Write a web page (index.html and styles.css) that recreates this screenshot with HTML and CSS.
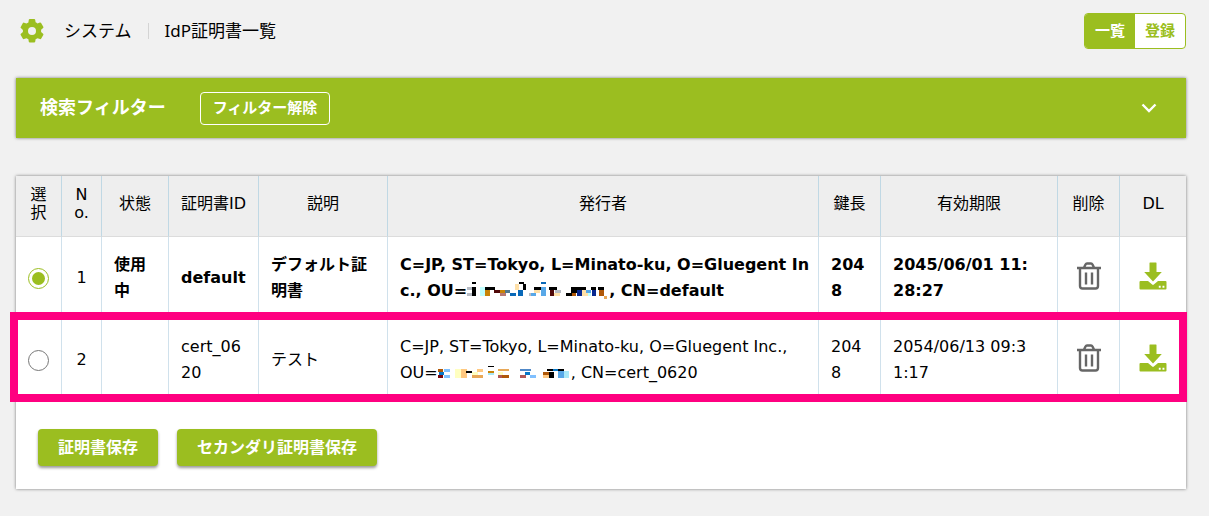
FILE: index.html
```html
<!DOCTYPE html>
<html lang="ja">
<head>
  <meta charset="UTF-8">
  <meta name="viewport" content="width=device-width, initial-scale=1.0">
  <title>IdP証明書一覧</title>
  <link rel="stylesheet" href="styles.css">
</head>
<body>

  <!-- shared icons -->
  <svg class="sprite" aria-hidden="true">
    <symbol id="trash" viewBox="0 0 24 28">
      <path d="M0 6h24M7 5.500l1.500-3q.5-1 1.500-1h4q1 0 1.500 1l1.500 3M3 6v18q0 2.500 2.500 2.500h13q2.500 0 2.500-2.500V6M9 10.500v12M15 10.500v12" fill="none" stroke="currentColor" stroke-width="2.400"/>
    </symbol>
    <symbol id="download" viewBox="0 0 28 28">
      <path d="M10.500 1q0-.5.5-.5h6q.500 0 .500.500v9h5.300L14 19.500 5.200 10h5.300z" fill="currentColor"/>
      <path d="M1.500 19H9l4.200 3.600q.8.600 1.600 0L19 19h7.500q1 0 1 1v6.500q0 1-1 1h-25q-1 0-1-1V20q0-1 1-1zm18.300 4.800v1.900h1.900v-1.900zm3.700 0v1.900h1.900v-1.900z" fill="currentColor" fill-rule="evenodd"/>
    </symbol>
  </svg>

  <header class="page-header">
    <svg class="gear" viewBox="0 0 24 24" aria-hidden="true">
      <path fill-rule="evenodd" d="M8.800.8q.2-.8 1-.8h4.400q.8 0 1 .8l.4 2.500q1 .4 1.900 1.100l2.400-.9q.8-.3 1.200.4l2.200 3.800q.4.700-.2 1.200l-2 1.800v2.200l2 1.800q.6.500.2 1.200l-2.200 3.800q-.4.700-1.200.4l-2.400-.9q-.9.700-1.900 1.100l-.4 2.500q-.2.800-1 .8H9.800q-.8 0-1-.8l-.4-2.500q-1-.4-1.900-1.100l-2.400.9q-.8.300-1.200-.4L.7 15.900q-.4-.7.2-1.200l2-1.600v-2.200l-2-1.800q-.6-.5-.2-1.200l2.200-3.800q.4-.7 1.200-.4l2.400.9q.9-.7 1.900-1.100zM12 8a4 4 0 1 0 0 8 4 4 0 0 0 0-8z" fill="currentColor"/>
    </svg>
    <span class="section">システム</span>
    <h1>IdP証明書一覧</h1>
    <nav class="switch">
      <a href="#list" class="active">一覧</a>
      <a href="#new">登録</a>
    </nav>
  </header>

  <section class="filter">
    <h2>検索フィルター</h2>
    <button type="button" class="clear">フィルター解除</button>
    <button type="button" class="expand" aria-label="開く">
      <svg width="16" height="10" viewBox="0 0 16 10"><path d="M1.500 1.500L8 8l6.500-6.500" fill="none" stroke="currentColor" stroke-width="2.400"/></svg>
    </button>
  </section>

  <main class="card">
    <table>
      <colgroup>
        <col class="c-select">
        <col class="c-no">
        <col class="c-state">
        <col class="c-id">
        <col class="c-desc">
        <col>
        <col class="c-bits">
        <col class="c-expire">
        <col class="c-delete">
        <col class="c-dl">
      </colgroup>
      <thead>
        <tr>
          <th>選択</th>
          <th>No.</th>
          <th>状態</th>
          <th>証明書ID</th>
          <th>説明</th>
          <th>発行者</th>
          <th>鍵長</th>
          <th>有効期限</th>
          <th>削除</th>
          <th>DL</th>
        </tr>
      </thead>
      <tbody>
        <tr class="in-use">
          <td class="center"><input type="radio" name="cert" aria-label="default" checked></td>
          <td class="center no">1</td>
          <td>使用中</td>
          <td>default</td>
          <td>デフォルト証明書</td>
          <td class="issuer">C=JP, ST=Tokyo, L=Minato-ku, O=Gluegent Inc., OU=<svg class="mask" width="142" height="18" viewBox="0 0 142 18" shape-rendering="crispEdges" aria-hidden="true">
            <path fill="#000" d="M5 1h4v2H5zM5 6h4v9H5zM18 6h10v3H18zM52 1h5v2h-5zM56 3h3v6h-3zM67 6h8v3h-8zM82 6h8v3h-8zM104 6h6v6h-6zM99 12h7v3h-7zM110 6h9v3h-9zM124 6h5v3h-5zM131 6h6v3h-6z"/>
            <path fill="#b8bcc4" d="M0 6h5v3H0zM0 12h5v3H0zM62 12h6v3h-6zM88 9h6v3h-6z"/>
            <path fill="#c0ffff" d="M13 6h5v9h-5zM119 12h5v3h-5z"/>
            <path fill="#c88408" d="M18 9h5v6h-5zM33 9h5v3h-5z"/>
            <path fill="#500808" d="M27 9h6v3h-6zM83 9h4v6h-4z"/>
            <path fill="#b87870" d="M33 12h6v3h-6z"/>
            <path fill="#507890" d="M38 9h5v3h-5z"/>
            <path fill="#0868b8" d="M43 12h6v3h-6zM51 9h5v6h-5zM74 1h5v2h-5z"/>
            <path fill="#ffe0a8" d="M48 3h4v6h-4zM67 9h6v3h-6zM115 9h6v6h-6zM87 12h6v3h-6z"/>
            <path fill="#58a8e8" d="M74 6h5v9h-5zM64 12h5v3h-5zM119 9h5v3h-5z"/>
            <path fill="#082890" d="M110 9h5v6h-5zM125 9h4v6h-4z"/>
            <path fill="#b05808" d="M132 9h5v6h-5zM105 12h4v3h-4z"/>
            <path fill="#e8a858" d="M137 15h3v3h-3z"/>
          </svg>, CN=default</td>
          <td>2048</td>
          <td class="expire">2045/06/01 11:28:27</td>
          <td class="center"><button type="button" class="icon" aria-label="削除"><svg class="trash"><use href="#trash"/></svg></button></td>
          <td class="center"><a href="#dl" class="icon download" aria-label="DL"><svg><use href="#download"/></svg></a></td>
        </tr>
        <tr class="marked">
          <td class="center"><input type="radio" name="cert" aria-label="cert_0620"></td>
          <td class="center no">2</td>
          <td></td>
          <td>cert_0620</td>
          <td>テスト</td>
          <td class="issuer">C=JP, ST=Tokyo, L=Minato-ku, O=Gluegent Inc.,<br>OU=<svg class="mask" width="133" height="18" viewBox="0 0 133 18" shape-rendering="crispEdges" aria-hidden="true">
            <path fill="#b05808" d="M0 6h5v3H0zM62 12h9v3h-9zM105 9h6v3h-6z"/>
            <path fill="#0878c8" d="M1 9h5v3H1zM87 9h5v3h-5zM114 6h6v2h-6z"/>
            <path fill="#780810" d="M0 12h5v3H0z"/>
            <path fill="#80c0ff" d="M6 6h6v3H6zM6 12h6v3H6zM92 12h6v3h-6z"/>
            <path fill="#ffffc0" d="M17 6h6v9h-6zM34 9h6v3h-6zM60 9h5v3h-5z"/>
            <path fill="#ffc880" d="M23 6h6v9h-6zM39 6h6v3h-6zM105 12h6v3h-6z"/>
            <path fill="#000" d="M28 8h6v2h-6zM50 3h6v1h-6zM109 6h6v2h-6zM120 6h6v2h-6zM111 9h5v6h-5z"/>
            <path fill="#e8a858" d="M34 12h11v3H34zM60 6h11v2H60z"/>
            <path fill="#c88408" d="M50 8h6v2h-6z"/>
            <path fill="#a8e8f8" d="M50 10h6v2h-6zM126 8h5v7h-5z"/>
            <path fill="#5088c8" d="M82 6h11v2H82z"/>
            <path fill="#b05858" d="M82 12h6v3h-6zM60 12h4v3h-4z"/>
            <path fill="#58a8e8" d="M120 8h6v7h-6z"/>
          </svg>, CN=cert_0620</td>
          <td>2048</td>
          <td class="expire">2054/06/13 09:31:17</td>
          <td class="center"><button type="button" class="icon" aria-label="削除"><svg class="trash"><use href="#trash"/></svg></button></td>
          <td class="center"><a href="#dl" class="icon download" aria-label="DL"><svg><use href="#download"/></svg></a></td>
        </tr>
      </tbody>
    </table>
    <div class="actions">
      <button type="button">証明書保存</button>
      <button type="button">セカンダリ証明書保存</button>
    </div>
  </main>

</body>
</html>
```
FILE: styles.css
```css
:root {
  --green: #9bbe20;
  --line: #d0e1ec;
  --mark: #ff0080;
}

* {
  box-sizing: border-box;
}

body {
  margin: 0;
  padding: 13px 23px 27px 16px;
  background: #f1f1f1;
  color: #000;
  font-family: "Noto Sans", "Noto Sans CJK JP", sans-serif;
  font-size: 16px;
  line-height: 26px;
}

h1,
h2 {
  margin: 0;
  font-size: 17px;
}

button {
  font-family: inherit;
  cursor: pointer;
}

.sprite {
  position: absolute;
  width: 0;
  height: 0;
}

.page-header {
  display: flex;
  align-items: center;
  height: 36px;
  padding-left: 4px;
  font-size: 17px;
}

.page-header h1 {
  padding-left: 16px;
  border-left: 1px solid #d4d4d4;
  font-weight: normal;
  line-height: 16px;
}

.gear {
  width: 24px;
  height: 24px;
  color: var(--green);
}

.section {
  margin: 0 16px 0 20px;
}

.switch {
  display: flex;
  margin-left: auto;
  border: 1px solid var(--green);
  border-radius: 4px;
  background: #fff;
  overflow: hidden;
}

.switch a {
  padding: 3px 10px 5px;
  color: var(--green);
  font-size: 15px;
  font-weight: bold;
  line-height: 26px;
  text-decoration: none;
}

.switch .active {
  background: var(--green);
  color: #fff;
}

.filter {
  display: flex;
  align-items: center;
  height: 60px;
  margin: 29px 0 38px;
  padding: 0 29px 0 24px;
  background: var(--green);
  color: #fff;
  box-shadow: 0 0 3px rgba(0, 0, 0, 0.5);
}

.filter h2 {
  padding-bottom: 3px;
  font-size: 18px;
}

.clear {
  height: 33px;
  margin-left: 34px;
  padding: 0 12px 3px;
  border: 1px solid #fff;
  border-radius: 4px;
  background: none;
  color: #fff;
  font-size: 15px;
  font-weight: bold;
}

.expand {
  display: flex;
  margin-left: auto;
  padding: 0;
  border: none;
  background: none;
  color: #fff;
}

.card {
  background: #fff;
  box-shadow: 0 0 3px rgba(0, 0, 0, 0.5);
}

table {
  width: 100%;
  table-layout: fixed;
  border-collapse: separate;
  border-spacing: 0;
  font-family: "DejaVu Sans", "Noto Sans CJK JP", sans-serif;
}

.c-select { width: 46px; }
.c-no { width: 40px; }
.c-state { width: 67px; }
.c-id { width: 90px; }
.c-desc { width: 129px; }
.c-bits { width: 62px; }
.c-expire { width: 177px; }
.c-delete { width: 62px; }
.c-dl { width: 66px; }

th {
  height: 61px;
  padding: 0 11px 5px;
  border-right: 1px solid #c0d8e4;
  border-bottom: 1px solid #dcdcdc;
  background: #eee;
  font-weight: normal;
  line-height: 18px;
  word-break: break-all;
}

td {
  height: 82px;
  padding: 0 12px;
  border-right: 1px solid var(--line);
  word-break: break-all;
}

th:last-child,
td:last-child {
  border-right: none;
}

.in-use td {
  font-weight: bold;
}

td.issuer {
  padding-right: 8px;
}

td.expire {
  padding-right: 24px;
}

td.center {
  padding: 0;
  text-align: center;
}

.in-use .no {
  font-weight: normal;
}

/* frame around the new certificate */
.marked {
  position: relative;
}

.marked td:first-child::after {
  content: "";
  position: absolute;
  inset: -7px -1px -1px -6px;
  border: 8px solid var(--mark);
  pointer-events: none;
}

input[type="radio"] {
  appearance: none;
  display: block;
  width: 21px;
  height: 21px;
  margin: 0 auto;
  border: 1px solid #777;
  border-radius: 50%;
  background: #fff;
}

input[type="radio"]:checked {
  padding: 3px;
  border-color: var(--green);
  background: var(--green) content-box;
}

.icon {
  display: flex;
  justify-content: center;
  padding: 0 0 4px;
  margin: 0 auto;
  border: none;
  background: none;
  color: #666;
}

.icon svg {
  width: 28px;
  height: 28px;
}

.icon .trash {
  width: 24px;
}

.icon.download {
  color: var(--green);
}

.mask {
  vertical-align: -3px;
}

.actions {
  display: flex;
  gap: 19px;
  padding: 28px 22px 23px;
}

.actions button {
  height: 37px;
  padding: 0 20px 3px;
  border: none;
  border-radius: 4px;
  background: var(--green);
  color: #fff;
  font-size: 16px;
  font-weight: bold;
  box-shadow: 0 2px 3px rgba(0, 0, 0, 0.4);
}
```
